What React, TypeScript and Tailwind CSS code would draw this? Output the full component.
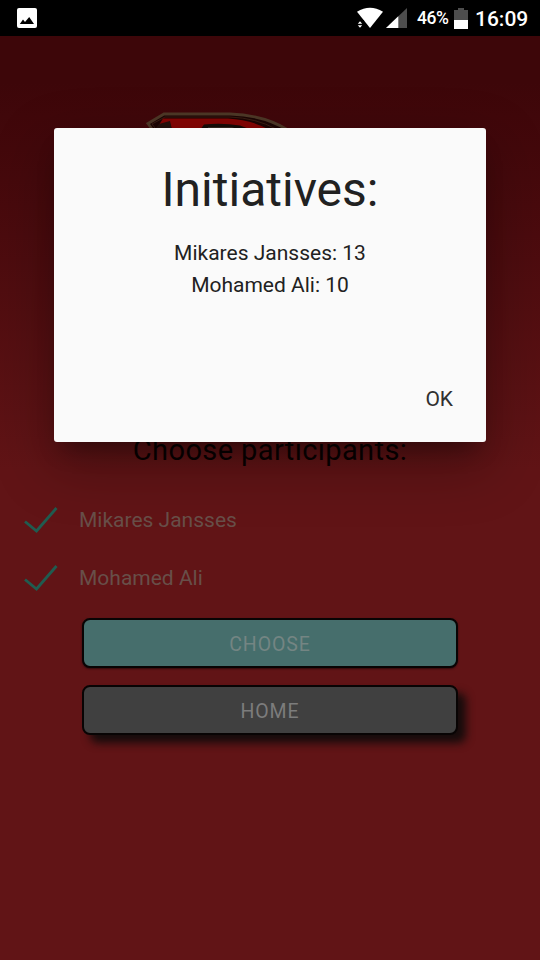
import React from "react";

const participants = ["Mikares Jansses", "Mohamed Ali"];

function StatusBar() {
  return (
    <header className="flex h-9 shrink-0 items-center bg-black pl-[17px] pr-3 text-white">
      <svg width="20" height="20" viewBox="0 0 20 20">
        <rect width="20" height="20" rx="2" fill="#fff" />
        <path d="M2.800 16 6 11.500l2 2.500 4.200-5L17 16z" fill="#000" />
      </svg>
      <svg className="ml-auto" width="50" height="22" viewBox="0 0 50 22">
        <path d="M0 4.800Q13 -3.500 26 4.800L13 21z" fill="#fff" />
        <path d="M0 13H7L8 22H0z" fill="#000" />
        <path d="M.8 16.800 3 14.300l2.200 2.500zM.8 18.300 3 20.800l2.200-2.500z" fill="#fff" />
        <path d="M50 1V21H29z" fill="#4d4d4d" />
        <path d="M41.300 9.300V21H29z" fill="#fff" />
      </svg>
      <span className="ml-[10px] w-[33px] whitespace-nowrap pt-[2px] text-[17.500px] font-medium leading-none tracking-[-0.4px]">46%</span>
      <svg className="ml-1" width="14" height="21" viewBox="0 0 14 21">
        <path d="M4 0h6v2h4v10H0V2h4z" fill="#4d4d4d" />
        <path d="M0 12h14v9H0z" fill="#fff" />
      </svg>
      <span className="ml-[7px] w-[53px] whitespace-nowrap pt-[2px] text-[21px] font-medium leading-none">16:09</span>
    </header>
  );
}

function Logo() {
  return (
    <svg className="ml-[146px] mt-[75px] block" width="150" height="24" viewBox="0 0 150 24">
      <path d="M1 12.500 17 2.500H88Q120 4 142 19H6z" fill="#1c0504" />
      <path d="M6 18 2 12.500 18 3H84Q118 4 142 19" fill="none" stroke="#4e3827" strokeWidth="2.800" />
      <path d="M9 17 6 13 19 6H84Q110 7 130 18" fill="none" stroke="#3a1d12" strokeWidth="1" />
      <path d="M17 7.500H82Q106 9 124 19H26L24 12 11 17z" fill="#850504" />
      <path d="M9 18 13 13 24 10 26 19z" fill="#24100b" />
      <path d="M54 19 58 13.500Q76 11.500 94 14.500L106 19z" fill="#160c08" />
      <path d="M62 16h24l12 5H62z" fill="#34281f" />
    </svg>
  );
}

function Dialog() {
  return (
    <section className="absolute left-[54px] top-32 flex h-[314px] w-[432px] flex-col rounded-[3px] bg-[#fafafa] text-center text-[#212121] shadow-[0_22px_56px_4px_rgba(0,0,0,0.26),0_15px_22px_-10px_rgba(0,0,0,0.35)]">
      <h1 className="mt-[34px] text-[48px] leading-[56px]">Initiatives:</h1>
      <div className="mt-[19px] text-[21px] leading-8">
        <p>Mikares Jansses: 13</p>
        <p>Mohamed Ali: 10</p>
      </div>
      <button className="mb-[27px] mr-[33px] mt-auto self-end text-[21px] leading-8 text-[#303030]">OK</button>
    </section>
  );
}

export default function App() {
  return (
    <div className="relative flex h-[960px] w-[540px] flex-col overflow-hidden bg-[#611416] font-['Roboto',sans-serif]">
      <StatusBar />
      <main className="flex flex-1 flex-col bg-linear-to-b from-[#3d0609] from-5% to-[#611416] to-47%">
        <Logo />
        <h2 className="mt-[297px] text-center text-[29px] leading-9 tracking-[0.4px] text-[#090202]">Choose participants:</h2>
        <ul className="mt-[23px] text-[21px] leading-[58px] text-[#684f49]">
          {participants.map((name) => (
            <li key={name} className="flex h-[58px] items-center pl-6">
              <svg width="34" height="28" viewBox="0 0 34 28" fill="none" stroke="#205c50" strokeWidth="2.800">
                <path d="M1 15.500 12.500 25 32.500 2" />
              </svg>
              <span className="ml-[21px]">{name}</span>
            </li>
          ))}
        </ul>
        <div className="mt-[11px] flex flex-col items-center gap-[17px] text-[19.500px] tracking-[0.9px]">
          <button className="h-[50px] w-[376px] rounded-lg border-2 border-[#080404] bg-[#466e6c] pt-[3px] text-[#748583] shadow-[0_1px_2px_rgba(0,0,0,0.5)]">CHOOSE</button>
          <button className="h-[50px] w-[376px] rounded-lg border-2 border-[#080404] bg-[#404040] pt-[3px] text-[#7c7c7c] shadow-[8px_8px_8px_#160c0c]">HOME</button>
        </div>
      </main>
      <Dialog />
    </div>
  );
}
